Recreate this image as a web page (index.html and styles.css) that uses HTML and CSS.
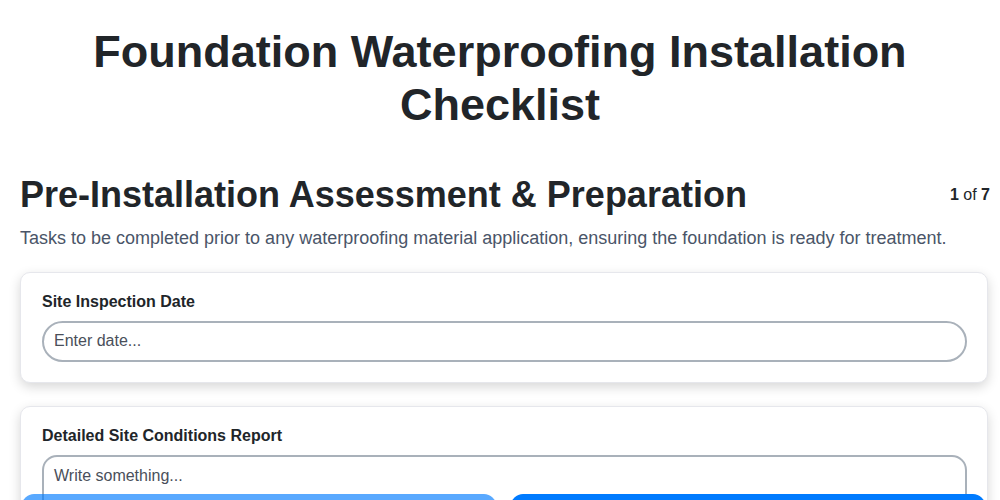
FILE: index.html
```html
<!DOCTYPE html>
<html lang="en">
<head>
<meta charset="utf-8">
<title>Foundation Waterproofing Installation Checklist</title>
<link rel="stylesheet" href="styles.css">
</head>
<body>
  <h1 class="page-title">Foundation Waterproofing Installation Checklist</h1>
  <main class="step">
    <div class="step-head">
      <h2 class="step-title">Pre-Installation Assessment &amp; Preparation</h2>
      <div class="step-count"><b>1</b> of <b>7</b></div>
    </div>
    <p class="step-desc">Tasks to be completed prior to any waterproofing material application, ensuring the foundation is ready for treatment.</p>

    <div class="card">
      <label class="field-label" for="date">Site Inspection Date</label>
      <input class="field-input" id="date" type="text" placeholder="Enter date...">
    </div>

    <div class="card">
      <label class="field-label" for="report">Detailed Site Conditions Report</label>
      <textarea class="field-area" id="report" rows="5" placeholder="Write something..."></textarea>
    </div>
  </main>
  <nav class="nav">
    <button class="btn btn-prev" disabled>Previous</button>
    <button class="btn btn-next">Next</button>
  </nav>
</body>
</html>
```
FILE: styles.css
```css
* { box-sizing: border-box; }
html, body { margin: 0; padding: 0; background: #fff; }
body {
  font-family: "Liberation Sans", Arial, Helvetica, sans-serif;
  color: #212529;
}
.page-title {
  margin: 25px auto 42px;
  max-width: 880px;
  text-align: center;
  font-size: 45px;
  line-height: 53px;
  font-weight: 700;
}
.step {
  padding: 0 10px 80px 20px;
}
.step-head {
  display: flex;
  align-items: center;
  justify-content: space-between;
}
.step-title {
  margin: 0;
  font-size: 36px;
  line-height: 1.2;
  font-weight: 700;
}
.step-count {
  font-size: 16px;
  line-height: 1.2;
  color: #212529;
}
.step-desc {
  margin: 12px 0 22px;
  font-size: 18px;
  line-height: 1.2;
  color: #4a5568;
}
.card {
  margin: 0 2px 23px 0;
  padding: 19px 20px 20px 21px;
  background: #fff;
  border: 1px solid #e6e7ec;
  border-radius: 10px;
  box-shadow: 0 4px 12px rgba(0, 0, 0, 0.16);
}
.field-label {
  display: block;
  margin-bottom: 10px;
  font-size: 16px;
  line-height: 1.2;
  font-weight: 700;
  color: #212529;
}
.field-input, .field-area {
  display: block;
  width: 100%;
  font-family: "Liberation Sans", Arial, Helvetica, sans-serif;
  font-size: 16px;
  color: #212529;
  border: 2px solid #a9b1ba;
  background: #fff;
  outline: none;
}
.field-input {
  height: 41px;
  padding: 0 10px;
  border-radius: 21px;
}
.field-area {
  padding: 9px 10px;
  line-height: 1.2;
  border-radius: 15px;
  resize: vertical;
}
.field-input::placeholder, .field-area::placeholder { color: #4a4f5a; opacity: 1; }
.nav {
  position: fixed;
  left: 22px;
  right: 15px;
  top: 494px;
  display: flex;
  gap: 15px;
}
.btn {
  flex: 1;
  height: 46px;
  border: none;
  border-radius: 12px;
  font-family: "Liberation Sans", Arial, Helvetica, sans-serif;
  font-size: 16px;
  font-weight: 700;
  color: #fff;
  background: #007bff;
}
.btn-prev { opacity: 0.65; }
```
